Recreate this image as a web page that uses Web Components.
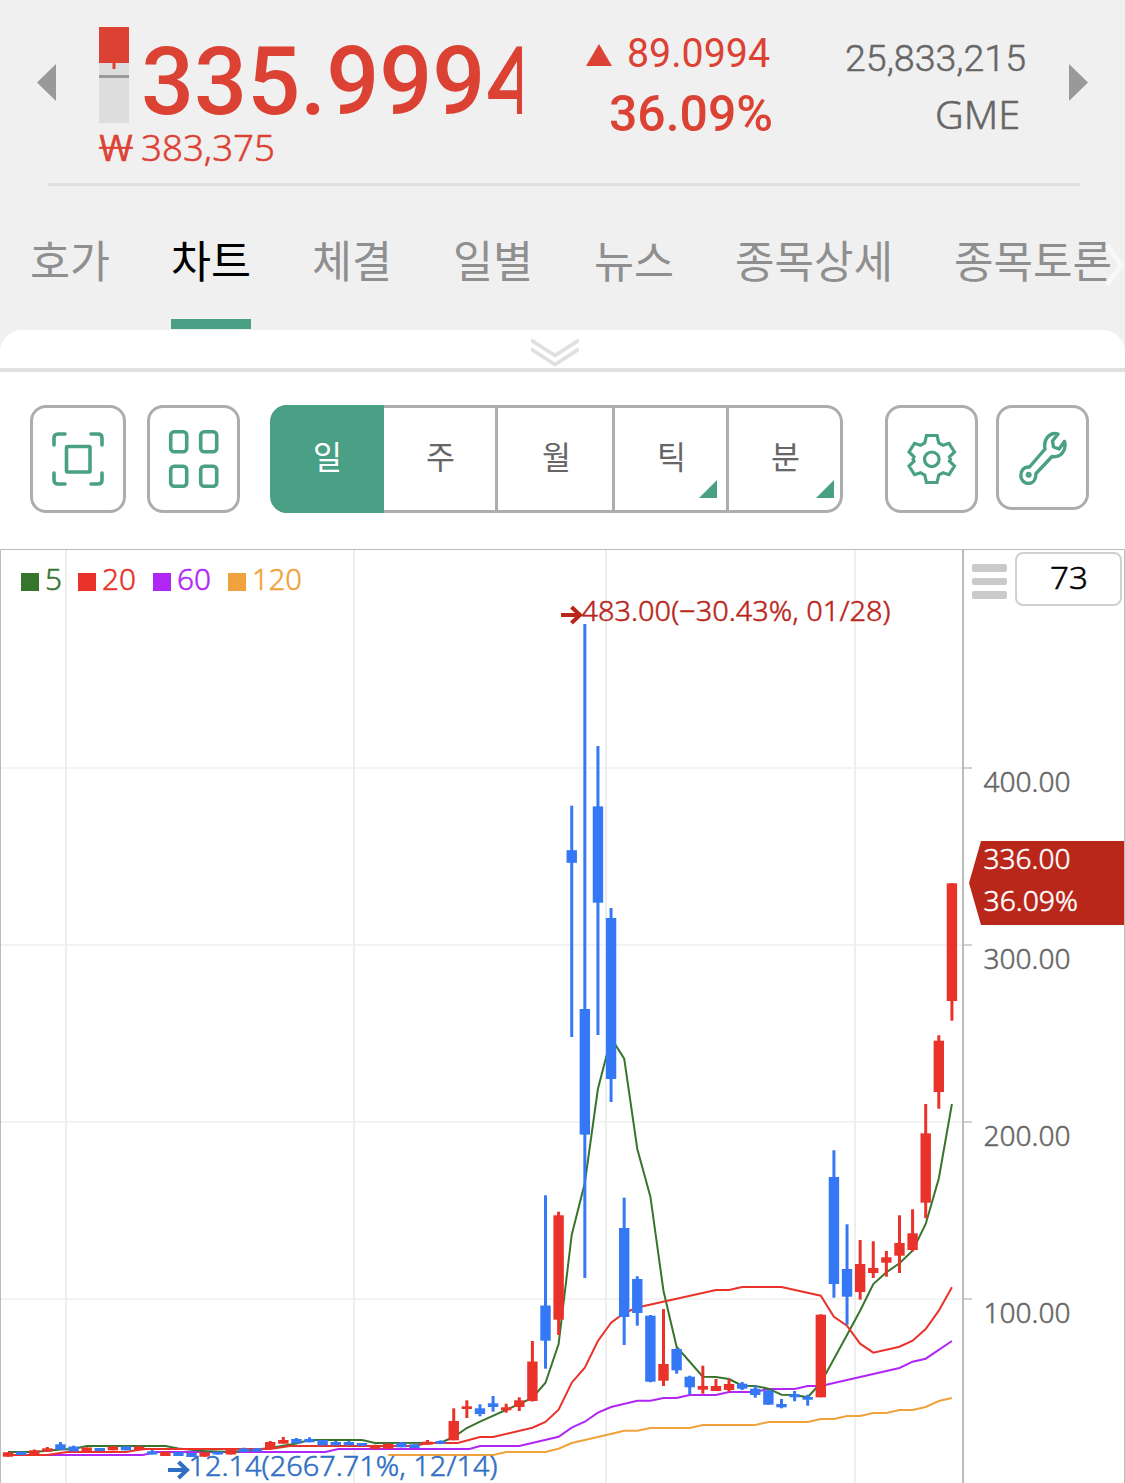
<!DOCTYPE html>
<html lang="ko">
<head>
<meta charset="utf-8">
<title>GME</title>
<style>
  body {
    margin: 0;
    width: 1125px;
    height: 1483px;
    overflow: hidden;
    background: #fff;
    font-family: "Noto Sans", "Noto Sans CJK KR", sans-serif;
  }
</style>
</head>
<body>
<stock-app></stock-app>

<script>
// text drawn at a fixed width, baseline at the bottom of the box
class FitLabel extends HTMLElement {
    constructor() {
        super();
        this.attachShadow({ mode: "open" });
    }
    connectedCallback() {
        const width = this.getAttribute("width");
        const size = this.getAttribute("size");
        this.shadowRoot.innerHTML = `
          <style>
            :host{
              display:block;
              flex:none;
              width:${width}px;
              height:${size}px;
            }
            svg{
              display:block;
              overflow:visible;
            }
            text{
              fill:currentColor;
              font-size:${size}px;
            }
            :host([light]) text{
              font-weight:300;
              stroke:currentColor;
              stroke-width:.5px;
            }
          </style>
          <svg width="${width}" height="${size}">
            <text y="${size}" textLength="${width}" lengthAdjust="spacingAndGlyphs">${this.getAttribute("text")}</text>
          </svg>
        `;
    }
}
customElements.define("fit-label", FitLabel);

class QuoteHeader extends HTMLElement {
    constructor() {
        super();
        this.attachShadow({ mode: "open" });
        this.shadowRoot.innerHTML = `
          <style>
            :host{
              display:block;
              height:186px;
              box-sizing:border-box;
              padding:0 37px;
              color:#dc4234;
            }
            #row{
              display:flex;
              height:183px;
            }
            .nav{
              flex:none;
              width:19px;
              height:38px;
              margin-top:64px;
            }
            .nav path{
              fill:#999;
            }
            #price{
              flex:none;
              width:423px;
              margin-left:43px;
            }
            #top{
              display:flex;
              height:123px;
            }
            #bar{
              flex:none;
              margin-top:27px;
            }
            #clip{
              box-sizing:border-box;
              width:393px;
              padding:20px 0 0 12px;
              overflow:hidden;
              font-family:Roboto, sans-serif;
              font-weight:500;
            }
            #won{
              display:flex;
              gap:8px;
              padding-top:1px;
            }
            #change{
              width:190px;
              margin-left:64px;
              font-family:Roboto, sans-serif;
            }
            #diff{
              display:flex;
              padding-top:27px;
              gap:15px;
            }
            #diff svg{
              margin-top:17px;
            }
            #pct{
              margin:14px 0 0 23px;
              font-weight:500;
            }
            #info{
              width:181px;
              margin:34px 0 0 69px;
              color:#666;
            }
            #volume{
              font-family:Roboto, sans-serif;
            }
            #symbol{
              margin:19px 0 0 90px;
            }
            #next{
              margin-left:43px;
            }
            hr{
              margin:0 8px 0 11px;
              height:3px;
              border:0;
              background:#e0e0e0;
            }
          </style>
          <div id="row">
            <svg class="nav" viewBox="0 0 19 38"><path d="M19 0v37L0 18.500z"/></svg>
            <div id="price">
              <div id="top">
                <svg id="bar" width="30" height="96">
                  <rect width="30" height="96" fill="#ddd"/>
                  <rect width="30" height="36" fill="#dc4234"/>
                  <rect x="13.500" y="36" width="3" height="6" fill="#dc4234"/>
                  <rect y="48" width="30" height="3" fill="#999"/>
                </svg>
                <div id="clip"><fit-label text="335.9994" width="397.500" size="94"></fit-label></div>
              </div>
              <div id="won">
                <fit-label light text="₩" width="34" size="37"></fit-label>
                <fit-label light text="383,375" width="134" size="37"></fit-label>
              </div>
            </div>
            <div id="change">
              <div id="diff">
                <svg width="26" height="22"><path d="M13 0l13 22H0z" fill="#dc4234"/></svg>
                <fit-label text="89.0994" width="143" size="40"></fit-label>
              </div>
              <div id="pct"><fit-label text="36.09%" width="164" size="50"></fit-label></div>
            </div>
            <div id="info">
              <fit-label light id="volume" text="25,833,215" width="181" size="37"></fit-label>
              <fit-label light id="symbol" text="GME" width="85" size="39"></fit-label>
            </div>
            <svg class="nav" id="next" viewBox="0 0 19 38"><path d="M0 0v37l19-18.500z"/></svg>
          </div>
          <hr>
        `;
    }
}
customElements.define("quote-header", QuoteHeader);

class TabItem extends HTMLElement {
    constructor() {
        super();
        this.attachShadow({ mode: "open" });
        const width = this.getAttribute("width");
        this.shadowRoot.innerHTML = `
          <style>
            :host{
              display:block;
              flex:none;
              box-sizing:border-box;
              width:${width}px;
              height:143px;
              padding-top:48px;
              color:#8f8f8f;
              border-bottom:10px solid transparent;
            }
            :host([selected]){
              color:#000;
              border-color:#49a085;
            }
          </style>
          <fit-label text="${this.getAttribute("label")}" width="${width}" size="44"></fit-label>
        `;
    }
}
customElements.define("tab-item", TabItem);

class TabBar extends HTMLElement {
    constructor() {
        super();
        this.attachShadow({ mode: "open" });
        this.shadowRoot.innerHTML = `
          <style>
            :host{
              display:flex;
              position:relative;
              height:144px;
              padding-left:30px;
              gap:61px;
              overflow:hidden;
            }
            svg{
              position:absolute;
              right:0;
              top:57px;
            }
          </style>
          <slot></slot>
          <svg width="21" height="44"><path d="M3 2l14 20L3 42" fill="none" stroke="#f8f8f8" stroke-width="5"/></svg>
        `;
    }
}
customElements.define("tab-bar", TabBar);

class PullHandle extends HTMLElement {
    constructor() {
        super();
        this.attachShadow({ mode: "open" });
        this.shadowRoot.innerHTML = `
          <style>
            :host{
              display:flex;
              box-sizing:border-box;
              height:42px;
              padding:8px 15px 0 0;
              justify-content:center;
              background:#fff;
              border-bottom:4px solid #e0e0e0;
              border-radius:22px 22px 0 0;
            }
          </style>
          <svg width="48" height="29" fill="none" stroke="#e0e0e0" stroke-width="3.800">
            <path d="M0 2l24 15.500L48 2M0 11l24 15.500L48 11"/>
          </svg>
        `;
    }
}
customElements.define("pull-handle", PullHandle);

class IconButton extends HTMLElement {
    constructor() {
        super();
        this.attachShadow({ mode: "open" });
        this.shadowRoot.innerHTML = `
          <style>
            :host{
              display:flex;
              flex:none;
              box-sizing:border-box;
              width:93px;
              height:108px;
              align-items:center;
              justify-content:center;
              border:3px solid #adadad;
              border-radius:16px;
              background:#fff;
            }
            :host([wide]){
              width:96px;
            }
            :host([short]){
              height:105px;
            }
          </style>
          <slot></slot>
        `;
    }
}
customElements.define("icon-button", IconButton);

class PeriodSwitch extends HTMLElement {
    constructor() {
        super();
        this.attachShadow({ mode: "open" });
        this.shadowRoot.innerHTML = `
          <style>
            :host{
              display:flex;
              flex:none;
              box-sizing:border-box;
              width:573px;
              height:108px;
              border:3px solid #adadad;
              border-left:0;
              border-radius:17px;
              color:#666;
            }
            div{
              position:relative;
              display:flex;
              box-sizing:border-box;
              justify-content:center;
              padding:29px 0 0 2px;
              border-right:3px solid #adadad;
            }
            .on{
              margin:-3px 0;
              padding:32px 0 0;
              border:0;
              border-radius:17px 0 0 17px;
              background:#49a085;
              color:#fff;
            }
            .more::after{
              content:"";
              position:absolute;
              right:9px;
              bottom:12px;
              border-left:18px solid transparent;
              border-bottom:18px solid #49a085;
            }
            .last{
              border:0;
            }
            .last::after{
              right:6px;
            }
          </style>
          <div class="on" style="width:114px"><fit-label text="일" width="29" size="32"></fit-label></div>
          <div style="width:114px"><fit-label text="주" width="29" size="32"></fit-label></div>
          <div style="width:117px"><fit-label text="월" width="29" size="32"></fit-label></div>
          <div class="more" style="width:114px"><fit-label text="틱" width="29" size="32"></fit-label></div>
          <div class="more last" style="width:111px"><fit-label text="분" width="29" size="32"></fit-label></div>
        `;
    }
}
customElements.define("period-switch", PeriodSwitch);

class ChartToolbar extends HTMLElement {
    constructor() {
        super();
        this.attachShadow({ mode: "open" });
        this.shadowRoot.innerHTML = `
          <style>
            :host{
              display:flex;
              box-sizing:border-box;
              height:177px;
              padding:33px 0 0 30px;
            }
            svg{
              fill:none;
              stroke:#49a085;
              stroke-width:3.600;
              stroke-linecap:round;
              stroke-linejoin:round;
            }
            icon-button + icon-button{
              margin-left:21px;
            }
            period-switch{
              margin:0 42px 0 30px;
            }
            icon-button + icon-button[short]{
              margin-left:18px;
            }
          </style>
          <icon-button wide>
            <svg width="54" height="56" viewBox="0 0 54 56">
              <path d="M3 14V7q0-4 4-4h7M40 3h7q4 0 4 4v7M51 42v7q0 4-4 4h-7M14 53H7q-4 0-4-4v-7"/>
              <rect x="15.500" y="15.500" width="23.500" height="25.500" rx="1"/>
            </svg>
          </icon-button>
          <icon-button>
            <svg width="52" height="60" viewBox="0 0 52 60">
              <rect x="2.700" y="2.700" width="16" height="20" rx="3.500"/>
              <rect x="32.700" y="2.700" width="16" height="20" rx="3.500"/>
              <rect x="2.700" y="37.300" width="16" height="20" rx="3.500"/>
              <rect x="32.700" y="37.300" width="16" height="20" rx="3.500"/>
            </svg>
          </icon-button>
          <period-switch></period-switch>
          <icon-button>
            <svg width="50" height="50" viewBox="0.500 0 50 50" style="stroke-width:3.200;stroke-linejoin:miter">
              <path d="M20 1.500h10.500l1.800 7.500 4.200 2.300 6-2 5.500 8.700-5 4.800 1 2.200-1 2.200 5 4.800-5.500 8.700-6-2-4.200 2.300-1.800 7.500H20L18.200 41 14 38.700l-6 2L2.500 32l5-4.800-1-2.200 1-2.200-5-4.800L8 9.300l6 2L18.200 9z"/>
              <circle cx="25.300" cy="25.300" r="7.300"/>
            </svg>
          </icon-button>
          <icon-button short>
            <svg width="48" height="54" viewBox="0 0 48 54" style="stroke-width:3.400">
              <path d="M39 3C31 .5 24 8 26 18L10.500 36C4.500 35.500 1.800 40 1.800 44.500S5 52.500 9.500 52.500s7.500-4 7.500-10L33 25.500C41.500 27 48 19.500 45.500 10.500L40 18l-5.500-2-1-6z"/>
              <circle cx="9.700" cy="43.700" r="1.300"/>
            </svg>
          </icon-button>
        `;
    }
}
customElements.define("chart-toolbar", ChartToolbar);

// [direction, high, body top, body bottom, low] in chart pixels, u = up, d = down
const CANDLES = [
    ["u", 1452.3, 1452.3, 1456.7, 1456.7], ["d", 1451.7, 1451.7, 1455, 1455], ["u", 1449.5, 1450.3, 1455.3, 1455.3],
    ["u", 1447, 1448.3, 1451.7, 1451.7], ["d", 1442, 1444.3, 1449.7, 1449.7], ["d", 1445.7, 1446.5, 1451.3, 1451.3],
    ["u", 1447.5, 1447.5, 1452, 1452], ["d", 1448, 1448, 1451, 1451], ["u", 1446, 1446.5, 1450.3, 1450.3],
    ["d", 1446.3, 1446.3, 1450.3, 1450.3], ["u", 1445.7, 1446.7, 1450.3, 1450.3], ["d", 1450, 1451.3, 1454.5, 1454.5],
    ["u", 1451.7, 1451.7, 1456, 1456], ["d", 1452, 1452, 1456, 1456], ["d", 1453, 1453, 1457, 1457],
    ["u", 1452.3, 1452.3, 1456.7, 1456.7], ["d", 1451.7, 1451.7, 1454.5, 1454.5], ["u", 1449.7, 1450, 1454.5, 1454.5],
    ["d", 1447.7, 1448.5, 1452, 1452], ["d", 1448, 1448.5, 1451.5, 1451.5], ["u", 1441, 1442, 1448.3, 1448.3],
    ["u", 1437, 1440, 1443.7, 1443.7], ["d", 1438, 1439, 1443.3, 1443.3], ["d", 1437.3, 1439, 1442.3, 1442.3],
    ["d", 1440, 1440, 1445.3, 1445.3], ["d", 1441, 1442, 1445.3, 1445.3], ["d", 1441, 1442, 1445.3, 1445.3],
    ["d", 1443, 1443, 1445.7, 1445.7], ["u", 1444.7, 1445, 1449, 1449], ["u", 1443, 1444, 1448.7, 1448.7],
    ["d", 1442, 1443, 1447.3, 1447.3], ["d", 1444.3, 1444.3, 1448, 1448], ["u", 1440, 1441.7, 1444.7, 1444.7],
    ["d", 1440.3, 1441, 1443.7, 1443.7], ["u", 1408.3, 1421, 1440.3, 1440.3], ["u", 1400.3, 1406.3, 1409, 1418],
    ["d", 1404.3, 1408.3, 1414, 1416.3], ["d", 1396, 1403.3, 1407, 1411.7], ["u", 1403.7, 1407.3, 1410.3, 1412.7],
    ["u", 1397.3, 1400.3, 1407, 1411], ["u", 1341, 1361.5, 1401, 1401.5], ["d", 1195.3, 1305.5, 1340.7, 1368.7],
    ["u", 1211.7, 1215.3, 1319.7, 1335], ["d", 805.7, 850.2, 862.8, 1037], ["d", 624, 1009, 1134.6, 1278],
    ["d", 746, 806.4, 902.7, 1035], ["d", 908, 918, 1079, 1102], ["d", 1197.7, 1228, 1317, 1345],
    ["d", 1276.3, 1279, 1313, 1325.7], ["d", 1315, 1315.7, 1381.7, 1382.3], ["u", 1309, 1364, 1380.7, 1386],
    ["d", 1348.3, 1349, 1370.3, 1373.7], ["d", 1375.7, 1376.7, 1387.3, 1394.3], ["u", 1365.7, 1386, 1389.7, 1393.7],
    ["u", 1379, 1386, 1391, 1391], ["u", 1379, 1384, 1390, 1391.7], ["d", 1382, 1383.7, 1388.7, 1390],
    ["d", 1385.7, 1388.7, 1395, 1397.7], ["d", 1390, 1390.7, 1404.7, 1404.7], ["d", 1399, 1404, 1407.3, 1408.3],
    ["d", 1391, 1394.3, 1397.3, 1401.3], ["d", 1394.7, 1397, 1399.7, 1405.7], ["u", 1314.3, 1314.7, 1397.3, 1397.3],
    ["d", 1150.3, 1177, 1284, 1297.7], ["d", 1224.3, 1269, 1296.7, 1324.7], ["u", 1240, 1264, 1292, 1299.7],
    ["u", 1241.3, 1268, 1273, 1278], ["u", 1251, 1257.3, 1262.7, 1276.7], ["u", 1215.3, 1243, 1255.7, 1273],
    ["u", 1209.3, 1233.3, 1250, 1251.3], ["u", 1104, 1133.3, 1202.7, 1218.3], ["u", 1035.3, 1040.7, 1092, 1108.7],
    ["u", 883.3, 883.3, 1001, 1020.7]
];

// moving averages, pairs of candle index and y
const AVERAGES = [
    ["#f0a23c", [29, 1455, 37, 1455, 38, 1452, 41, 1452, 42, 1448.7, 43, 1443, 45, 1437, 47, 1430.7, 48, 1430.7, 49, 1428, 52, 1428, 53, 1425, 57, 1425, 58, 1422, 61, 1422, 62, 1419, 63, 1419, 64, 1416, 65, 1416, 66, 1413, 67, 1413, 68, 1410, 69, 1410, 70, 1407, 71, 1401, 72, 1398]],
    ["#b026f5", [0, 1455, 10.3, 1455, 11.3, 1452, 24.2, 1452, 25.2, 1449, 35.2, 1449, 36, 1446, 39, 1446, 42, 1436.7, 43, 1427.7, 44, 1421.7, 45, 1412.7, 46, 1407, 48, 1400.7, 49, 1400.7, 50, 1398, 51, 1398, 52, 1395, 54, 1395, 55, 1392, 57, 1392, 58, 1389, 60, 1389, 61, 1386, 62, 1386, 68, 1368, 69, 1361.7, 70, 1358.7, 72, 1341]],
    ["#37742c", [0, 1452, 2, 1452, 4, 1449.5, 5, 1449, 6, 1446, 12, 1446, 13, 1448.5, 15, 1451, 17, 1452, 20, 1448, 22, 1443.5, 23, 1440, 27, 1440, 28, 1443, 33, 1442.7, 34, 1437, 35, 1428, 36, 1421.7, 40, 1398, 41, 1382.7, 42, 1344, 43, 1235, 44, 1183, 45, 1089, 46, 1038, 47, 1058.6, 48, 1149, 49, 1196.7, 50, 1291, 51, 1346.7, 53, 1376.7, 54, 1377, 55, 1379, 56, 1385.7, 57, 1386, 58, 1388.7, 59, 1394.7, 60, 1395, 61, 1397.3, 62, 1383, 64, 1335, 65, 1310.7, 66, 1284, 67, 1272.3, 68, 1263.3, 69, 1250.7, 70, 1224, 71, 1178.5, 72, 1104]],
    ["#e93229", [0, 1455, 3, 1455, 4.5, 1452, 9, 1452, 10.3, 1449, 20, 1449, 21.5, 1446, 31, 1446, 32, 1443, 34.3, 1443, 36, 1437, 37, 1437, 40, 1427.7, 41, 1422, 42, 1409.7, 43, 1382.7, 44, 1367.7, 45, 1341, 46, 1322.7, 47, 1313, 48, 1307.5, 54, 1290, 55, 1290, 56, 1287, 59, 1287, 62, 1295.7, 63, 1316.7, 64, 1325.7, 65, 1343.7, 66, 1352.7, 68, 1346.7, 69, 1340.7, 70, 1329, 71, 1310.7, 72, 1287.3]]
];

class StockChart extends HTMLElement {
    constructor() {
        super();
        this.attachShadow({ mode: "open" });
        this.shadowRoot.innerHTML = `
          <style>
            :host{
              display:block;
              position:relative;
              height:934px;
            }
            #canvas{
              display:block;
            }
            text{
              font-size:28px;
              font-weight:300;
              stroke-width:.5px;
            }
          </style>
          <svg id="canvas" width="1125" height="934" viewBox="0 549 1125 934">
            ${this._grid()}
            ${this._averages()}
            ${this._candles()}
            ${this._axis()}
            ${this._marks()}
          </svg>
          <slot></slot>
        `;
    }
    _x(i) {
        return 8 + i * 13.11;
    }
    _text(text, x, y, width, color) {
        return `<text x="${x}" y="${y}" fill="${color}" stroke="${color}" textLength="${width}" lengthAdjust="spacingAndGlyphs">${text}</text>`;
    }
    _grid() {
        const rows = [768, 945, 1122, 1299].map(y =>
            `<path d="M1 ${y}H962" stroke="#f3f3f3" stroke-width="2"/><path d="M964 ${y}h8" stroke="#d0cfda" stroke-width="2"/>`);
        const cols = [66, 354, 606, 855].map(x =>
            `<path d="M${x} 550V1483" stroke="#eee" stroke-width="2"/>`);
        return rows.join("") + cols.join("");
    }
    _averages() {
        return AVERAGES.map(([color, data]) => {
            let points = "";
            for (let i = 0; i < data.length; i += 2) {
                points += this._x(data[i]).toFixed(1) + "," + data[i + 1] + " ";
            }
            return `<polyline points="${points}" fill="none" stroke="${color}" stroke-width="2"/>`;
        }).join("");
    }
    _candles() {
        return CANDLES.map(([dir, high, top, bottom, low], i) => {
            const x = this._x(i);
            const fill = dir === "u" ? "#e93229" : "#3478f6";
            return `<g fill="${fill}">
              <rect x="${x - 1.5}" y="${high}" width="3" height="${low - high}"/>
              <rect x="${x - 5.2}" y="${top}" width="10.400" height="${bottom - top}"/>
            </g>`;
        }).join("");
    }
    _axis() {
        const labels = [["400.00", 791.5], ["300.00", 968.5], ["200.00", 1145.5], ["100.00", 1322.5]].map(([t, y]) =>
            this._text(t, 983.5, y, 87, "#666"));
        return `
          <path d="M0.500 1483V549.500H1124.500V1483" fill="none" stroke="#bbb"/>
          <path d="M963 550V1483" stroke="#bbb" stroke-width="2"/>
          ${labels.join("")}
          <path d="M969 883l12-42h143v84H981z" fill="#b9271b"/>
          ${this._text("336.00", 983.5, 868.5, 87, "#fff")}
          ${this._text("36.09%", 983.5, 910.5, 94.5, "#fff")}
        `;
    }
    _marks() {
        return `
          <g fill="none" stroke-width="4">
            <path d="M561 615h20M571.500 607l8.500 8-8.500 8" stroke="#b9271b"/>
            <path d="M168 1470h20M178.500 1462l8.500 8-8.500 8" stroke="#2f6fc4"/>
          </g>
          ${this._text("483.00(−30.43%, 01/28)", 581.5, 620.5, 309, "#b9271b")}
          ${this._text("12.14(2667.71%, 12/14)", 188.5, 1476, 309, "#2f6fc4")}
        `;
    }
}
customElements.define("stock-chart", StockChart);

class ChartLegend extends HTMLElement {
    constructor() {
        super();
        this.attachShadow({ mode: "open" });
        this.shadowRoot.innerHTML = `
          <style>
            :host{
              position:absolute;
              left:21px;
              top:11px;
              display:flex;
            }
            div{
              display:flex;
              width:75px;
              gap:6px;
            }
            div:first-of-type{
              width:57px;
            }
            i{
              flex:none;
              width:18px;
              height:18px;
              margin-top:13px;
              background:currentColor;
            }
          </style>
          <div style="color:#37742c"><i></i><fit-label light text="5" width="17" size="30"></fit-label></div>
          <div style="color:#e93229"><i></i><fit-label light text="20" width="34" size="30"></fit-label></div>
          <div style="color:#b026f5"><i></i><fit-label light text="60" width="34" size="30"></fit-label></div>
          <div style="color:#f0a23c"><i></i><fit-label light text="120" width="50" size="30"></fit-label></div>
        `;
    }
}
customElements.define("chart-legend", ChartLegend);

class BarCount extends HTMLElement {
    constructor() {
        super();
        this.attachShadow({ mode: "open" });
        this.shadowRoot.innerHTML = `
          <style>
            :host{
              position:absolute;
              left:972px;
              top:3px;
              display:flex;
              gap:8px;
            }
            #menu{
              display:flex;
              flex-direction:column;
              width:35px;
              gap:6px;
              padding-top:12px;
            }
            #menu i{
              height:7.500px;
              border-radius:2px;
              background:#cacaca;
            }
            #box{
              display:flex;
              box-sizing:border-box;
              width:107px;
              height:54px;
              padding-top:3px;
              justify-content:center;
              border:2px solid #d0d0d0;
              border-radius:8px;
              background:#fff;
              color:#000;
            }
          </style>
          <div id="menu"><i></i><i></i><i></i></div>
          <div id="box"><fit-label light text="73" width="38" size="32"></fit-label></div>
        `;
    }
}
customElements.define("bar-count", BarCount);

class StockApp extends HTMLElement {
    constructor() {
        super();
        this.attachShadow({ mode: "open" });
        this.shadowRoot.innerHTML = `
          <style>
            :host{
              display:block;
            }
            header{
              background:#f0f0f0;
              height:352px;
              margin-bottom:-22px;
            }
          </style>
          <header>
            <quote-header></quote-header>
            <tab-bar>
              <tab-item label="호가" width="80"></tab-item>
              <tab-item label="차트" width="80" selected></tab-item>
              <tab-item label="체결" width="80"></tab-item>
              <tab-item label="일별" width="80"></tab-item>
              <tab-item label="뉴스" width="80"></tab-item>
              <tab-item label="종목상세" width="158"></tab-item>
              <tab-item label="종목토론" width="158"></tab-item>
            </tab-bar>
          </header>
          <pull-handle></pull-handle>
          <chart-toolbar></chart-toolbar>
          <stock-chart>
            <chart-legend></chart-legend>
            <bar-count></bar-count>
          </stock-chart>
        `;
    }
}
customElements.define("stock-app", StockApp);
</script>
</body>
</html>
